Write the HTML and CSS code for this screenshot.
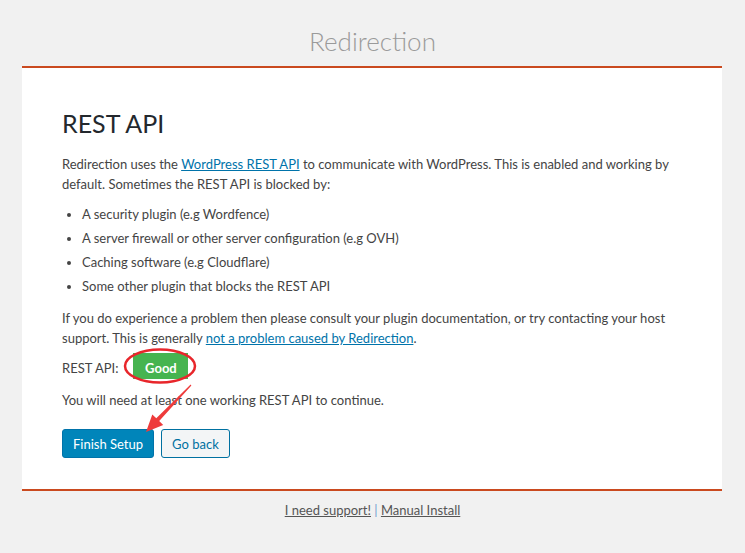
FILE: index.html
```html
<!DOCTYPE html>
<html lang="en">
<head>
<meta charset="utf-8">
<title>Redirection</title>
<link rel="stylesheet" href="styles.css">
</head>
<body>
<div class="page">
  <header class="header">
    <h1 class="title">Redirection</h1>
  </header>
  <section class="card">
    <h2 class="heading">REST API</h2>
    <p class="text first">Redirection uses the <a href="#">WordPress REST API</a> to communicate with WordPress. This is enabled and working by default. Sometimes the REST API is blocked by:</p>
    <ul class="list">
      <li>A security plugin (e.g Wordfence)</li>
      <li>A server firewall or other server configuration (e.g OVH)</li>
      <li>Caching software (e.g Cloudflare)</li>
      <li>Some other plugin that blocks the REST API</li>
    </ul>
    <p class="text text-gap">If you do experience a problem then please consult your plugin documentation, or try contacting your host support. This is generally <a href="#">not a problem caused by Redirection</a>.</p>
    <div class="status">
      <span class="status-label">REST API:</span>
      <span class="badge">Good</span>
    </div>
    <p class="text need">You will need at least one working REST API to continue.</p>
    <div class="actions">
      <button class="btn btn-primary">Finish Setup</button>
      <button class="btn btn-secondary">Go back</button>
    </div>
  </section>
  <footer class="footer">
    <a href="#">I need support!</a> <span class="sep">|</span> <a href="#">Manual Install</a>
  </footer>
  <svg class="annotation" width="745" height="553" viewBox="0 0 745 553" aria-hidden="true">
    <ellipse cx="160" cy="366" rx="35" ry="16.5" fill="none" stroke="#e8262b" stroke-width="2.5"/>
    <polygon points="191.4,385.4 159.2,421.1 163.2,424.9 146,432 152.3,414.5 156.3,418.3 190.6,384.6" fill="#ee3b3b"/>
  </svg>
</div>
</body>
</html>
```

FILE: styles.css
```css
html, body {
  margin: 0;
  padding: 0;
}

body {
  background: #f1f1f1;
  font-family: Lato, "Noto Sans", sans-serif;
  font-size: 13px;
  color: #444;
}

.page {
  position: relative;
  min-height: 553px;
}

.header {
  padding-top: 26px;
  margin-bottom: 10px;
}

.title {
  margin: 0;
  text-align: center;
  font-size: 26px;
  font-weight: 300;
  line-height: 30px;
  color: #9a9a9a;
}

.card {
  width: 620px;
  margin-left: 22px;
  background: #fff;
  border-top: 2px solid #ca4a1f;
  border-bottom: 2px solid #ca4a1f;
  padding: 38px 40px 31px;
}

.heading {
  margin: 0;
  font-size: 25px;
  font-weight: 400;
  line-height: 34px;
  color: #23282d;
}

.text {
  margin: 14px 0 0;
  line-height: 19.5px;
}

.text.first {
  margin-top: 15px;
}

.text a {
  color: #0073aa;
}

.list {
  margin: 11px 0 0;
  padding-left: 20px;
  list-style: disc;
}

.list li {
  line-height: 18px;
  margin-bottom: 6px;
}

.text-gap {
  margin-top: 14px;
}

.status {
  display: flex;
  align-items: center;
  margin-top: 5px;
  height: 26px;
}

.status-label {
  margin-right: 15px;
  padding-top: 4px;
}

.badge {
  display: inline-flex;
  align-items: center;
  justify-content: center;
  width: 55px;
  height: 26px;
  padding-top: 3px;
  box-sizing: border-box;
  background: #46b450;
  color: #fff;
  font-weight: 700;
}

.need {
  margin-top: 12px;
}

.actions {
  display: flex;
  gap: 7px;
  margin-top: 18px;
}

.btn {
  height: 29px;
  padding: 1px 10px 0;
  border-radius: 3px;
  font-family: inherit;
  font-size: 13px;
  line-height: 26px;
  cursor: pointer;
}

.btn-primary {
  background: #0085ba;
  border: 1px solid #0073aa;
  color: #fff;
}

.btn-secondary {
  background: #f3f5f6;
  border: 1px solid #0071a1;
  color: #0071a1;
}

.footer {
  margin-top: 10px;
  text-align: center;
  line-height: 19.5px;
}

.footer a {
  color: #555;
}

.sep {
  color: #6e9fcf;
}

.annotation {
  position: absolute;
  top: 0;
  left: 0;
  pointer-events: none;
}
```
